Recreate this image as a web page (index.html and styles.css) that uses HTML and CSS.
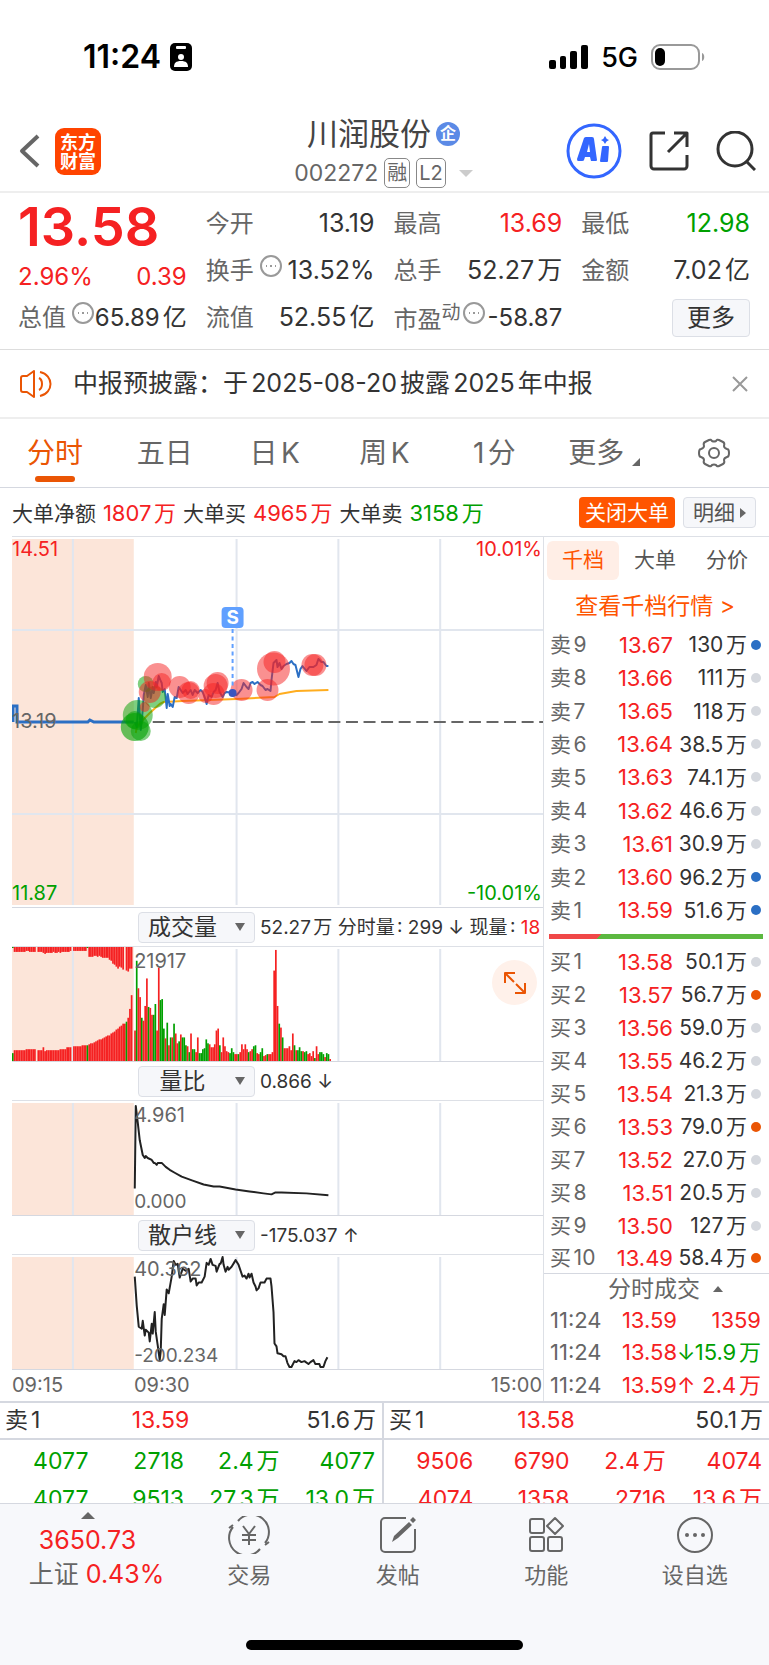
FILE: index.html
```html
<!DOCTYPE html>
<html lang="zh-CN">
<head>
    <meta charset="UTF-8">
    <meta name="viewport" content="width=device-width, initial-scale=1.0">
    <title>川润股份 002272</title>
    <link rel="stylesheet" href="styles.css">
</head>
<body>

<div class="status-bar">
    <div class="status-left">
        <span class="clock">11:24</span>
        <svg width="22" height="28" viewBox="0 0 22 28"><rect width="22" height="28" rx="5"/><rect x="6" y="3" width="10" height="3" rx="1" fill="#fff"/><circle cx="11" cy="14" r="3" fill="#fff"/><path d="M4 24c0-4 2-6 7-6s7 2 7 6z" fill="#fff"/></svg>
    </div>
    <div class="status-right">
        <svg width="39" height="24" viewBox="0 0 39 24"><rect y="15" width="7" height="9" rx="2"/><rect x="11" y="11" width="6" height="13" rx="2"/><rect x="21" y="6" width="7" height="18" rx="2"/><rect x="32" width="7" height="24" rx="2"/></svg>
        <span class="network">5G</span>
        <svg width="54" height="26" viewBox="0 0 54 26"><rect x="1" y="1" width="47" height="24" rx="8" fill="none" stroke="#999" stroke-width="2"/><rect x="4" y="4" width="10" height="18" rx="5"/><path d="M51 9c3 1 3 7 0 8z" fill="#999"/></svg>
    </div>
</div>

<header class="header">
    <div class="header-left">
        <a href="#" aria-label="返回"><svg width="22" height="34" viewBox="0 0 22 34" class="stroke"><path d="M19 2L3 17l16 15" stroke="#666" stroke-width="4"/></svg></a>
        <a href="#" class="logo">东方<br>财富</a>
    </div>
    <div class="title">
        <h1>川润股份<span class="corp">企</span></h1>
        <div class="code">002272<span class="tag">融</span><span class="tag">L2</span><svg width="14" height="7" viewBox="0 0 14 7"><path d="M0 0h14L7 7z" fill="#ccc"/></svg></div>
    </div>
    <div class="header-right">
        <button class="icon-btn" aria-label="Ai"><svg width="56" height="56" viewBox="0 0 56 56"><circle cx="28" cy="28" r="26" fill="#fff" stroke="#3366ff" stroke-width="3"/><path fill-rule="evenodd" d="M18 15q1-1 2-1h6q2 0 2 2l3 21q0 1-1 1h-5l-1-4h-5l-1 3q0 1-2 1h-4q-1 0-1-2zM23 21l-2 8h3z" fill="#3366ff"/><path d="M36 24q0-1 1-1h5q1 0 1 1l-1 14q0 1-1 1h-6q-1 0-1-1z" fill="#3366ff"/><path d="M39 13q1 3 4 4q-3 1-4 4q-1-3-4-4q3-1 4-4z" fill="#3366ff"/></svg></button>
        <button class="icon-btn" aria-label="分享"><svg width="40" height="40" viewBox="0 0 40 40" class="stroke"><path d="M16 2H4a2 2 0 0 0-2 2v31a3 3 0 0 0 3 3h30a3 3 0 0 0 3-3V24M25 2h13v14M38 2L19 21" stroke="#333" stroke-width="3"/></svg></button>
        <button class="icon-btn" aria-label="搜索"><svg width="40" height="40" viewBox="0 0 40 40" class="stroke"><circle cx="19" cy="18" r="17" stroke="#333" stroke-width="3"/><path d="M31 31l8 8" stroke="#333" stroke-width="3"/></svg></button>
    </div>
</header>

<section class="quote">
    <div class="quote-col">
        <div class="price red">13.58</div>
        <div class="change red"><span>2.96%</span><span>0.39</span></div>
        <div class="cell cell-short"><span class="label">总值</span><svg class="more-dot" viewBox="0 0 22 22"><circle cx="11" cy="11" r="10"/><path d="M6 11h1M10 11h2M15 11h1"/></svg><span class="value small">65.89亿</span></div>
    </div>
    <div class="quote-col">
        <div class="cell"><span class="label">今开</span><span class="value">13.19</span></div>
        <div class="cell"><span class="label">换手</span><svg class="more-dot" viewBox="0 0 22 22"><circle cx="11" cy="11" r="10"/><path d="M6 11h1M10 11h2M15 11h1"/></svg><span class="value">13.52%</span></div>
        <div class="cell"><span class="label">流值</span><span class="value">52.55亿</span></div>
    </div>
    <div class="quote-col">
        <div class="cell"><span class="label">最高</span><span class="value red">13.69</span></div>
        <div class="cell"><span class="label">总手</span><span class="value">52.27万</span></div>
        <div class="cell"><span class="label">市盈<sup>动</sup></span><svg class="more-dot pe-dot" viewBox="0 0 22 22"><circle cx="11" cy="11" r="10"/><path d="M6 11h1M10 11h2M15 11h1"/></svg><span class="value small">-58.87</span></div>
    </div>
    <div class="quote-col">
        <div class="cell"><span class="label">最低</span><span class="value green">12.98</span></div>
        <div class="cell"><span class="label">金额</span><span class="value">7.02亿</span></div>
        <div class="cell"><button class="more-btn">更多</button></div>
    </div>
</section>

<section class="notice">
    <svg width="34" height="28" viewBox="0 0 34 28" class="stroke"><path d="M2 8q0-2 2-2h4l7-5v26l-7-5H4q-2 0-2-2z" stroke="#ea5504" stroke-width="2"/><path d="M20 8c4 2 4 10 0 12M21 2c14 3 14 21 0 24" stroke="#ea5504" stroke-width="2"/></svg>
    <p>中报预披露：于2025-08-20披露2025年中报</p>
    <button class="icon-btn" aria-label="关闭"><svg width="16" height="16" viewBox="0 0 16 16" class="stroke"><path d="M1 1l14 14M15 1L1 15" stroke="#999" stroke-width="2"/></svg></button>
</section>

<nav class="tabs">
    <button class="active">分时</button>
    <button>五日</button>
    <button>日K</button>
    <button>周K</button>
    <button>1分</button>
    <button>更多<svg class="corner" width="8" height="8" viewBox="0 0 8 8"><path d="M8 0v8H0z" fill="#666"/></svg></button>
    <button aria-label="设置"><svg width="32" height="30" viewBox="0 0 32 30" class="stroke"><path d="M11 2q2-1 3 1q2 1 4 0q1-2 3-1l4 2q2 1 1 4q0 2 3 3q2 0 2 4t-2 4q-3 1-3 3q1 3-1 4l-4 2q-2 1-3-1q-2-1-4 0q-1 2-3 1l-4-2q-2-1-1-4q0-2-3-3q-2 0-2-4t2-4q3-1 3-3q-1-3 1-4z" stroke="#666" stroke-width="2"/><circle cx="16" cy="15" r="5" stroke="#666" stroke-width="2"/></svg></button>
</nav>

<div class="big-orders">
    <p>大单净额 <span class="red">1807万</span> 大单买 <span class="red">4965万</span> 大单卖 <span class="green">3158万</span></p>
    <button class="close-big">关闭大单</button>
    <button class="detail">明细<svg width="6" height="10" viewBox="0 0 6 10"><path d="M0 0l6 5-6 5z" fill="#666"/></svg></button>
</div>

<main class="main">
    <div class="charts">
        <div class="chart chart-price">
            <svg viewBox="0 0 532 370" preserveAspectRatio="none">
                <rect y="2" width="122" height="366" fill="#fce5d9"/>
                <path class="grid-line" d="M61 2V368M225 2V368M327 2V368M429 2V368M0 93H532M0 277H532"/>
                <path d="M141 185H532" stroke="#666" stroke-width="2" stroke-dasharray="12 5.6"/>
                <path d="M1 185V169H5V185H76L78 183L82 185H122" fill="none" stroke="#2b6fc4" stroke-width="3"/>
                <polyline class="line" stroke="#ffad1f" points="124,196 125,190 131,183 138,176 148,167 152,165 171,164 225,162 263,160 268,157 285,154 317,153"/>
                <polyline class="line" stroke="#2b6fc4" points="123,185 125,190 127,161 129,193 131,173 132,158 134,148 136,160 137,146 139,161 141,150 142,156 144,145 145,150 147,139 149,144 150,146 151,155 153,152 155,171 156,157 158,169 159,167 161,170 163,160 165,161 167,150 169,153 171,156 174,153 176,157 179,153 181,158 183,153 186,156 189,153 191,155 193,160 195,167 197,158 200,160 202,155 204,153 206,146 208,155 211,160 213,156 215,155 221,156 225,158 227,156 230,152 232,146 235,150 237,152 239,146 241,145 243,147 246,145 249,148 251,149 254,153 256,152 259,154 260,143 262,126 265,123 266,130 268,126 270,132 272,129 275,127 278,126 280,124 282,127 284,128 287,140 289,132 291,129 295,134 298,130 302,130 305,128 307,122 310,125 312,125 315,129 317,129"/>
                <g fill="#00a000">
                    <circle cx="126" cy="178" r="15" fill-opacity=".5"/><circle cx="123" cy="190" r="14" fill-opacity=".6"/><circle cx="129" cy="194" r="10" fill-opacity=".5"/><circle cx="123" cy="183" r="9" fill-opacity=".5"/><circle cx="134" cy="147" r="8" fill-opacity=".5"/><circle cx="143" cy="160" r="11" fill-opacity=".5"/>
                </g>
                <g fill="#f52122" fill-opacity=".5">
                    <circle cx="146" cy="140" r="14"/><circle cx="150" cy="145" r="9"/><circle cx="138" cy="155" r="11"/><circle cx="133" cy="170" r="5"/><circle cx="168" cy="150" r="11"/><circle cx="177" cy="156" r="11"/><circle cx="179" cy="153" r="9"/><circle cx="194" cy="159" r="7"/><circle cx="202" cy="157" r="11"/><circle cx="204" cy="149" r="12"/><circle cx="206" cy="146" r="11"/><circle cx="230" cy="153" r="11"/><circle cx="256" cy="153" r="11"/><circle cx="262" cy="132" r="16.5"/><circle cx="263" cy="125" r="11"/><circle cx="301" cy="128" r="11"/><circle cx="304" cy="128" r="11"/>
                </g>
                <path d="M221 92V154" stroke="#60a0ff" stroke-width="2" stroke-dasharray="4 3.5"/>
                <circle cx="221" cy="156" r="4" fill="#3a55c0"/>
                <rect x="210" y="70" width="22" height="21" rx="4" fill="#60a0ff"/>
                <text x="221" y="87" text-anchor="middle" class="sell-mark">S</text>
            </svg>
            <span class="mark top-left red">14.51</span>
            <span class="mark top-right red">10.01%</span>
            <span class="mark mid-left">13.19</span>
            <span class="mark bottom-left green">11.87</span>
            <span class="mark bottom-right green">-10.01%</span>
        </div>

        <div class="indicator">
            <span class="picker"><select aria-label="指标一"><option>成交量</option></select></span>
            <span>52.27万 分时量: 299 ↓ 现量: <span class="red">18</span></span>
        </div>
        <div class="chart chart-volume">
            <svg viewBox="0 0 532 116" preserveAspectRatio="none">
                <rect width="122" height="116" fill="#fce5d9"/>
                <path class="grid-line" d="M61 2V116M225 2V116M327 2V116M429 2V116"/>
                <g id="volume-bars"></g>
            </svg>
            <span class="mark open-top">21917</span>
            <button class="expand" aria-label="放大"><svg width="24" height="24" viewBox="0 0 24 24" class="stroke"><path d="M2 12V2h10M2 2l9 9M22 12v10H12M22 22l-9-9" stroke="#ea5504" stroke-width="2"/></svg></button>
        </div>

        <div class="indicator">
            <span class="picker"><select aria-label="指标二"><option>量比</option></select></span>
            <span>0.866 ↓</span>
        </div>
        <div class="chart chart-ratio">
            <svg viewBox="0 0 532 116" preserveAspectRatio="none">
                <rect y="2" width="122" height="114" fill="#fce5d9"/>
                <path class="grid-line" d="M61 2V116M225 2V116M327 2V116M429 2V116"/>
                <polyline class="line" stroke="#222" points="123,89 124,5 126,22 128,40 131,55 133,58 134,56 136,58 140,60 142,63 143,63 145,65 146,63 150,63 154,67 158,70 163,73 170,77 181,81 192,85 202,87 208,87 224,90 238,92 252,94 260,95 264,93 270,93 295,94 317,96"/>
            </svg>
            <span class="mark open-top">4.961</span>
            <span class="mark open-bottom">0.000</span>
        </div>

        <div class="indicator">
            <span class="picker"><select aria-label="指标三"><option>散户线</option></select></span>
            <span>-175.037 ↑</span>
        </div>
        <div class="chart chart-retail">
            <svg viewBox="0 0 532 116" preserveAspectRatio="none">
                <rect y="2" width="122" height="114" fill="#fce5d9"/>
                <path class="grid-line" d="M61 2V116M225 2V116M327 2V116M429 2V116"/>
                <polyline class="line" stroke="#222" points="123,22 125,52 127,73 130,75 131,67 133,82 134,76 137,79 138,88 140,70 141,80 143,58 144,78 146,92 148,107 149,98 150,65 152,50 153,61 155,35 157,39 160,22 162,6 164,10 166,9 168,23 171,14 174,16 177,14 179,27 181,24 184,24 185,31 187,28 190,28 193,22 195,8 197,10 199,4 201,10 204,11 205,17 208,9 209,9 211,2 212,10 214,17 216,12 217,15 220,12 223,7 224,5 227,10 231,22 233,21 235,24 237,19 238,23 240,19 242,28 244,32 245,36 247,34 249,28 253,28 255,24 259,24 260,32 262,58 263,90 265,93 266,100 270,101 272,103 274,103 276,110 278,114 280,114 283,108 285,109 287,107 290,109 293,108 297,111 299,109 302,107 304,111 308,111 309,114 312,114 314,108 316,104"/>
            </svg>
            <span class="mark open-top">40.362</span>
            <span class="mark open-bottom">-200.234</span>
        </div>

        <div class="time-axis"><span>09:15</span><span>09:30</span><span>15:00</span></div>
    </div>

    <aside class="depth">
        <div class="depth-tabs">
            <button class="active">千档</button>
            <button>大单</button>
            <button>分价</button>
        </div>
        <a href="#" class="depth-link">查看千档行情 &gt;</a>
        <table class="asks">
            <tr><td>卖9</td><td>13.67</td><td>130万</td><td><i class="dot blue"></i></td></tr>
            <tr><td>卖8</td><td>13.66</td><td>111万</td><td><i class="dot"></i></td></tr>
            <tr><td>卖7</td><td>13.65</td><td>118万</td><td><i class="dot"></i></td></tr>
            <tr><td>卖6</td><td>13.64</td><td>38.5万</td><td><i class="dot"></i></td></tr>
            <tr><td>卖5</td><td>13.63</td><td>74.1万</td><td><i class="dot"></i></td></tr>
            <tr><td>卖4</td><td>13.62</td><td>46.6万</td><td><i class="dot"></i></td></tr>
            <tr><td>卖3</td><td>13.61</td><td>30.9万</td><td><i class="dot"></i></td></tr>
            <tr><td>卖2</td><td>13.60</td><td>96.2万</td><td><i class="dot blue"></i></td></tr>
            <tr><td>卖1</td><td>13.59</td><td>51.6万</td><td><i class="dot blue"></i></td></tr>
        </table>
        <div class="balance"></div>
        <table class="bids">
            <tr><td>买1</td><td>13.58</td><td>50.1万</td><td><i class="dot"></i></td></tr>
            <tr><td>买2</td><td>13.57</td><td>56.7万</td><td><i class="dot orange"></i></td></tr>
            <tr><td>买3</td><td>13.56</td><td>59.0万</td><td><i class="dot"></i></td></tr>
            <tr><td>买4</td><td>13.55</td><td>46.2万</td><td><i class="dot"></i></td></tr>
            <tr><td>买5</td><td>13.54</td><td>21.3万</td><td><i class="dot"></i></td></tr>
            <tr><td>买6</td><td>13.53</td><td>79.0万</td><td><i class="dot orange"></i></td></tr>
            <tr><td>买7</td><td>13.52</td><td>27.0万</td><td><i class="dot"></i></td></tr>
            <tr><td>买8</td><td>13.51</td><td>20.5万</td><td><i class="dot"></i></td></tr>
            <tr><td>买9</td><td>13.50</td><td>127万</td><td><i class="dot"></i></td></tr>
            <tr><td>买10</td><td>13.49</td><td>58.4万</td><td><i class="dot orange"></i></td></tr>
        </table>
        <button class="ticks-title">分时成交<svg width="10" height="6" viewBox="0 0 10 6"><path d="M0 6h10L5 0z" fill="#666"/></svg></button>
        <table class="ticks">
            <tr><td>11:24</td><td class="red">13.59</td><td></td><td class="red">1359</td></tr>
            <tr><td>11:24</td><td class="red">13.58</td><td class="green">↓</td><td class="green">15.9万</td></tr>
            <tr><td>11:24</td><td class="red">13.59</td><td class="red">↑</td><td class="red">2.4万</td></tr>
        </table>
    </aside>
</main>

<section class="queues">
    <div class="queue">
        <div class="queue-head"><span>卖1</span><span class="red">13.59</span><span>51.6万</span></div>
        <table class="queue-list green">
            <tr><td>4077</td><td>2718</td><td>2.4万</td><td>4077</td></tr>
            <tr><td>4077</td><td>9513</td><td>27.3万</td><td>13.0万</td></tr>
        </table>
    </div>
    <div class="queue">
        <div class="queue-head"><span>买1</span><span class="red">13.58</span><span>50.1万</span></div>
        <table class="queue-list red">
            <tr><td>9506</td><td>6790</td><td>2.4万</td><td>4074</td></tr>
            <tr><td>4074</td><td>1358</td><td>2716</td><td>13.6万</td></tr>
        </table>
    </div>
</section>

<footer class="footer">
    <nav class="bottom-nav">
        <a href="#" class="index">
            <svg width="14" height="7" viewBox="0 0 14 7"><path d="M0 7h14L7 0z" fill="#666"/></svg>
            <span class="red">3650.73</span>
            <span class="index-name">上证 <span class="red">0.43%</span></span>
        </a>
        <a href="#"><svg width="44" height="38" viewBox="0 0 44 38" class="stroke"><path d="M11 5A17 17 0 0 1 38 27M38 29l4-3M33 33A17 17 0 0 1 6 11M6 9l-4 3" stroke="#666" stroke-width="2"/><path d="M16 10l6 8 6-8M22 18v11M15 19h14M15 24h14" stroke="#666" stroke-width="2"/></svg>交易</a>
        <a href="#"><svg width="38" height="38" viewBox="0 0 38 38" class="stroke"><path d="M27 2H6a4 4 0 0 0-4 4v26a4 4 0 0 0 4 4h26a4 4 0 0 0 4-4V13" stroke="#666" stroke-width="2"/><path d="M13 26l2-6L30 6l3 3-14 13zM31 4l3-3 3 3-3 3z" fill="#666"/></svg>发帖</a>
        <a href="#"><svg width="36" height="38" viewBox="0 0 36 38" class="stroke"><g stroke="#666" stroke-width="2"><rect x="2" y="3" width="14" height="14" rx="2"/><rect x="2" y="21" width="14" height="14" rx="2"/><rect x="20" y="21" width="14" height="14" rx="2"/><path d="M27 2l8 8-8 8-8-8z"/></g></svg>功能</a>
        <a href="#"><svg width="38" height="38" viewBox="0 0 38 38" class="stroke"><circle cx="19" cy="19" r="17" stroke="#666" stroke-width="2"/><g fill="#666"><circle cx="11" cy="19" r="2"/><circle cx="19" cy="19" r="2"/><circle cx="27" cy="19" r="2"/></g></svg>设自选</a>
    </nav>
    <div class="home-bar"></div>
</footer>

<script>
    // Height in px, a leading "-" means the minute closed lower (green)
    const minutes = [31,-102,74,65,-44,41,56,84,-55,54,47,-47,-58,31,95,-62,-63,-33,23,-39,16,-24,24,-38,28,18,-20,27,-24,-24,-16,15,-9,28,-12,-12,9,24,-8,-8,-12,-13,-22,-18,17,14,14,17,31,33,-16,9,24,15,10,9,-8,-13,-9,7,7,-7,9,17,12,17,12,-9,10,12,-15,-16,8,7,-9,-13,5,6,-7,7,7,9,92,113,56,-38,34,-24,13,13,13,15,11,28,-16,11,-11,-14,-10,10,-9,-10,7,8,5,10,-3,15,7,-9,-9,-7,4,-8,-7,2];

    // Call auction: matched volume at the bottom, unmatched hanging from the top
    const matched = [-8,11,11,11,11,11,11,11,12,12,12,12,12,12,0,11,11,11,14,10,11,11,11,11,11,11,11,11,12,12,12,12,14,14,14,0,15,15,15,15,15,16,16,16,-16,17,18,18,19,20,21,22,22,23,24,25,26,26,28,29,30,32,33,35,36,38,38,-40,44,53,67];
    const unmatched = [-1,5,5,5,5,5,5,5,4,4,5,5,5,5,0,5,5,5,6,7,6,6,6,6,5,6,6,5,6,5,5,5,5,5,4,0,4,4,4,4,4,4,4,4,-1,10,10,10,9,9,10,9,10,11,11,11,11,13,14,17,18,20,22,20,21,23,0,24,25,22,22];

    const BASE = 116;
    const STEP = 1.7;

    function bar(x, y, height, color) {
        return `<rect x="${x.toFixed(2)}" y="${y}" width="${STEP}" height="${height}" fill="${color}"/>`;
    }

    function color(v) {
        return v < 0 ? "#00a000" : "#f52122";
    }

    let bars = "";
    minutes.forEach((v, i) => bars += bar(122.4 + i * STEP, BASE - Math.abs(v), Math.abs(v), color(v)));
    matched.forEach((v, i) => bars += bar(i * STEP, BASE - Math.abs(v), Math.abs(v), color(v)));
    unmatched.forEach((v, i) => bars += bar(i * STEP, 0, Math.abs(v), color(v)));
    document.getElementById("volume-bars").innerHTML = bars;
</script>

</body>
</html>
```

FILE: styles.css
```css
* {
    box-sizing: border-box;
}

body {
    margin: 0;
    background-color: #fff;
    color: #333;
    font-family: Inter, "Noto Sans CJK SC", sans-serif;
    font-size: 21px;
    line-height: 1;
    text-autospace: normal;
}

h1, p {
    margin: 0;
    font-weight: normal;
}

a {
    color: inherit;
    text-decoration: none;
}

button, select {
    font: inherit;
    color: inherit;
    padding: 0;
    border: none;
    background: none;
    cursor: pointer;
}

table {
    width: 100%;
    border-collapse: collapse;
    table-layout: fixed;
}

td {
    padding: 0;
    white-space: nowrap;
}

svg {
    display: block;
    flex: none;
}

.stroke {
    fill: none;
    stroke-linejoin: round;
}

.red {
    color: #f52122;
}

.green {
    color: #00a000;
}

/* status bar */
.status-bar {
    display: flex;
    justify-content: space-between;
    align-items: center;
    height: 114px;
    padding: 0 64px 0 83px;
    color: #000;
}

.status-left, .status-right {
    display: flex;
    align-items: center;
}

.status-left {
    gap: 9px;
}

.status-right {
    gap: 13px;
}

.clock {
    font-size: 32px;
    font-weight: 600;
}

.network {
    font-size: 27px;
    font-weight: 500;
}

/* header */
.header {
    display: grid;
    grid-template-columns: 1fr auto 1fr;
    align-items: center;
    height: 79px;
    padding: 0 13px 10px 19px;
    border-bottom: 2px solid #eee;
}

.header-left, .header-right {
    display: flex;
    align-items: center;
}

.header-left {
    gap: 14px;
}

.header-right {
    justify-content: flex-end;
    gap: 27px;
}

.logo {
    width: 46px;
    height: 47px;
    padding-top: 5px;
    border-radius: 9px;
    background-color: #ff4400;
    color: #fff;
    font-size: 18px;
    font-weight: 700;
    line-height: 19px;
    text-align: center;
}

.title {
    display: flex;
    flex-direction: column;
    align-items: center;
    gap: 6px;
    margin: 2px 8px 0 0;
}

.title h1 {
    display: flex;
    align-items: center;
    gap: 5px;
    font-size: 31px;
    line-height: 36px;
    color: #444;
}

.corp {
    width: 24px;
    height: 24px;
    border-radius: 50%;
    background-color: #5b8ae6;
    color: #fff;
    font-size: 16px;
    font-weight: 700;
    line-height: 23px;
    text-align: center;
}

.code {
    display: flex;
    align-items: center;
    height: 30px;
    font-size: 23px;
    color: #666;
}

.code svg {
    margin-left: 13px;
}

.tag {
    height: 30px;
    margin-left: 6px;
    padding: 0 2px;
    border: 1px solid #888;
    border-radius: 5px;
    font-size: 20px;
    line-height: 28px;
}

/* quote */
.quote {
    display: grid;
    grid-template-columns: repeat(4, 1fr);
    gap: 19px;
    padding: 7px 19px 8px 18px;
    border-bottom: 1px solid #ddd;
    font-size: 24px;
}

.price {
    height: 54px;
    font-size: 54px;
    font-weight: 600;
    line-height: 54px;
}

.change {
    display: flex;
    justify-content: space-between;
    align-items: center;
    height: 46px;
}

.cell {
    display: flex;
    align-items: center;
    height: 47px;
    white-space: nowrap;
}

.cell-short {
    height: 36px;
}

.label {
    color: #666;
}

.label sup {
    font-size: 19px;
    line-height: 1;
}

.value {
    margin-left: auto;
    font-size: 25px;
}

.small {
    font-size: 24px;
}

.more-dot {
    width: 22px;
    height: 22px;
    margin: 0 0 10px 6px;
    fill: none;
    stroke: #999;
    stroke-width: 2;
}

.pe-dot {
    margin-left: 2px;
}

.more-btn {
    width: 78px;
    height: 38px;
    margin-left: auto;
    border: 1px solid #dcdfe6;
    border-radius: 4px;
    background-color: #f6f7fa;
}

/* notice */
.notice {
    display: flex;
    align-items: center;
    gap: 20px;
    height: 69px;
    padding: 0 21px 0 19px;
    border-bottom: 2px solid #eee;
    font-size: 25px;
}

.notice p {
    flex: 1;
}

/* period tabs */
.tabs {
    display: grid;
    grid-template-columns: repeat(7, 1fr);
    height: 69px;
    border-bottom: 1px solid #d5d8e0;
    font-size: 28px;
    color: #666;
}

.tabs button {
    position: relative;
    display: flex;
    justify-content: center;
    align-items: center;
}

.tabs .corner {
    align-self: flex-end;
    margin: 0 0 21px 8px;
}

.tabs .active {
    color: #ea5504;
}

.tabs .active::after {
    content: "";
    position: absolute;
    left: 50%;
    bottom: 5px;
    width: 40px;
    height: 6px;
    margin-left: -20px;
    border-radius: 3px;
    background-color: #ea5504;
}

.big-orders {
    display: flex;
    align-items: center;
    gap: 8px;
    height: 48px;
    padding: 1px 13px 0 12px;
}

.big-orders p {
    flex: 1;
    white-space: nowrap;
}

.big-orders p span {
    margin: 0 1px;
    font-size: 22px;
}

.big-orders button {
    height: 31px;
    border-radius: 4px;
}

.close-big {
    padding: 0 6px;
    background-color: #ff5500;
    color: #fff;
}

.detail {
    display: flex;
    align-items: center;
    gap: 5px;
    padding: 0 9px;
    border: 1px solid #dcdfe6;
    background-color: #f6f7fa;
    color: #555;
}

/* charts */
.main {
    display: grid;
    grid-template-columns: minmax(0, 1fr) 225px;
    border-bottom: 2px solid #d5d8e0;
}

.charts {
    padding-left: 12px;
    border-right: 1px solid #dde0e6;
}

.chart {
    position: relative;
    border-top: 1px solid #dde0e6;
    border-bottom: 1px solid #d5d8e0;
    height: 116px;
}

.chart svg {
    width: 100%;
    height: 100%;
}

.chart-price {
    height: 372px;
}

.grid-line {
    fill: none;
    stroke: #e1e6ee;
    stroke-width: 2;
}

.line {
    fill: none;
    stroke-width: 2;
    stroke-linejoin: round;
}

.sell-mark {
    fill: #fff;
    font-size: 19px;
    font-weight: 700;
}

.mark {
    position: absolute;
    font-size: 20px;
    color: #666;
}

.mark.red {
    color: #f52122;
}

.mark.green {
    color: #00a000;
}

.top-left {
    top: 2px;
    left: 0;
}

.top-right {
    top: 2px;
    right: 1px;
}

.mid-left {
    top: 174px;
    left: 0;
}

.bottom-left {
    bottom: 4px;
    left: 0;
}

.bottom-right {
    bottom: 4px;
    right: 1px;
}

.open-top {
    top: 4px;
    left: 23%;
}

.open-bottom {
    bottom: 4px;
    left: 23%;
    font-size: 19px;
}

.indicator {
    display: flex;
    align-items: center;
    gap: 5px;
    height: 38px;
    padding-left: 126px;
    font-size: 19px;
    white-space: nowrap;
}

.picker {
    position: relative;
}

.picker select {
    display: block;
    appearance: none;
    width: 117px;
    height: 31px;
    padding-right: 28px;
    border: 1px solid #dcdfe6;
    border-radius: 4px;
    background-color: #f6f7fa;
    font-size: 23px;
    text-align-last: center;
}

.picker::after {
    content: "";
    position: absolute;
    top: 11px;
    right: 10px;
    border: 5px solid transparent;
    border-top: 8px solid #666;
    border-bottom: none;
    pointer-events: none;
}

.expand {
    position: absolute;
    top: 13px;
    right: 6px;
    display: flex;
    justify-content: center;
    align-items: center;
    width: 45px;
    height: 45px;
    border-radius: 50%;
    background-color: #fff1ea;
}

.expand svg {
    width: 24px;
    height: 24px;
}

.time-axis {
    display: grid;
    grid-template-columns: 23% 1fr auto;
    align-items: center;
    height: 30px;
    padding-right: 1px;
    font-size: 20px;
    color: #666;
}

/* order book */
.depth {
    padding: 4px 6px 0 3px;
    border-top: 1px solid #dde0e6;
}

.depth-tabs {
    display: grid;
    grid-template-columns: repeat(3, 1fr);
    height: 39px;
    color: #555;
}

.depth-tabs button {
    padding-bottom: 2px;
}

.depth-tabs .active {
    border-radius: 6px;
    background-color: #ffeee6;
    color: #ff5500;
}

.depth-link {
    display: block;
    height: 48px;
    color: #ff5500;
    font-size: 23px;
    line-height: 52px;
    text-align: center;
}

.asks {
    height: 299px;
}

.asks td, .bids td {
    width: 74px;
    text-align: right;
}

.asks td:first-child, .bids td:first-child {
    width: 52px;
    padding-left: 3px;
    color: #666;
    text-align: left;
}

.asks td:nth-child(2), .bids td:nth-child(2) {
    color: #f52122;
    font-size: 22px;
}

.asks td:last-child, .bids td:last-child {
    width: 16px;
}

.bids td {
    height: 33px;
}

.bids tr:last-child td {
    height: 31px;
}

.dot {
    display: block;
    width: 10px;
    height: 10px;
    margin-left: auto;
    margin-right: 2px;
    border-radius: 50%;
    background-color: #d5d8de;
}

.dot.blue {
    background-color: #2b6fc4;
}

.dot.orange {
    background-color: #ea5504;
}

.balance {
    height: 5px;
    margin: 7px 0 6px 2px;
    background: linear-gradient(135deg, #f04848 24%, #5cb840 24%);
}

.ticks-title {
    display: flex;
    justify-content: center;
    align-items: center;
    gap: 13px;
    width: 225px;
    height: 31px;
    margin-left: -3px;
    padding-left: 18px;
    border-top: 1px solid #d5d8e0;
    color: #666;
    font-size: 23px;
}

.ticks {
    height: 97px;
    font-size: 22px;
}

.ticks td:first-child {
    width: 56px;
    padding-left: 3px;
    color: #666;
}

.ticks td:nth-child(2) {
    width: 74px;
    text-align: right;
}

.ticks td:nth-child(3) {
    width: 16px;
}

.ticks td:last-child {
    padding-right: 2px;
    text-align: right;
}

/* order queues */
.queues {
    display: grid;
    grid-template-columns: 382fr 387fr;
    height: 101px;
    overflow: hidden;
    border-bottom: 1px solid #d5d8e0;
    font-size: 23px;
}

.queue + .queue {
    border-left: 2px solid #d5d8e0;
}

.queue-head {
    display: grid;
    grid-template-columns: 1fr 1fr 1fr;
    align-items: center;
    height: 37px;
    padding: 0 6px 0 5px;
    border-bottom: 2px solid #d5d8e0;
}

.queue-head span:nth-child(2) {
    margin-right: 60px;
    text-align: center;
}

.queue-head span:last-child {
    text-align: right;
}

.queue-list td {
    height: 38px;
    padding: 4px 7px 0 0;
    text-align: right;
}

/* bottom bar */
.footer {
    height: 162px;
    background-color: #f7f8fb;
}

.bottom-nav {
    display: grid;
    grid-template-columns: 175px repeat(4, 1fr);
    height: 136px;
    color: #666;
}

.bottom-nav a {
    display: flex;
    flex-direction: column;
    align-items: center;
    gap: 10px;
    padding-top: 12px;
    font-size: 22px;
}

.bottom-nav .index {
    gap: 9px;
    padding-top: 8px;
    font-size: 25px;
}

.index-name {
    margin-left: 18px;
}

.home-bar {
    width: 36%;
    height: 10px;
    margin: 0 auto;
    border-radius: 5px;
    background-color: #000;
}
```
